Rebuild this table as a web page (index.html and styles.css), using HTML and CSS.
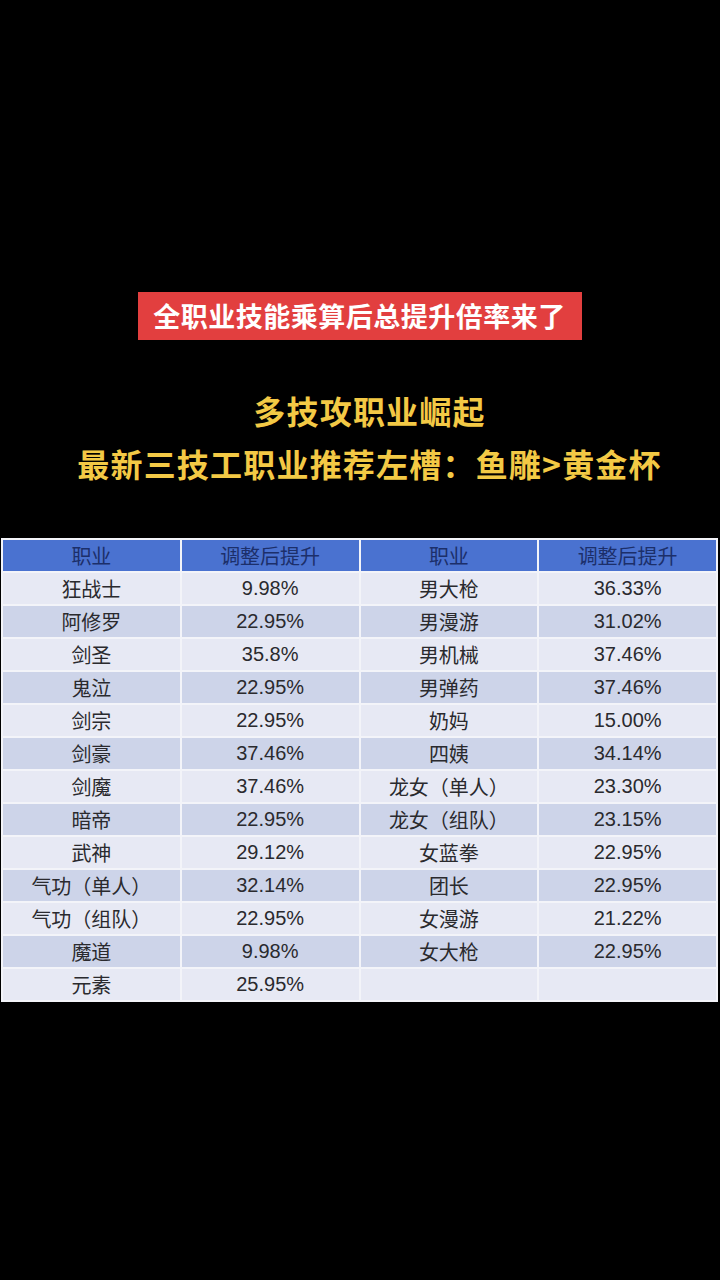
FILE: index.html
```html
<!DOCTYPE html>
<html lang="zh-CN">
<head>
<meta charset="utf-8">
<link rel="stylesheet" href="styles.css">
</head>
<body>
<main class="page">
  <div class="banner-wrap"><div class="banner">全职业技能乘算后总提升倍率来了</div></div>
  <div class="title">
    <p>多技攻职业崛起</p>
    <p>最新三技工职业推荐左槽：鱼雕&gt;黄金杯</p>
  </div>
  <table class="rates">
    <thead>
      <tr><th>职业</th><th>调整后提升</th><th>职业</th><th>调整后提升</th></tr>
    </thead>
    <tbody>
      <tr><td>狂战士</td><td class="num">9.98%</td><td>男大枪</td><td class="num">36.33%</td></tr>
      <tr><td>阿修罗</td><td class="num">22.95%</td><td>男漫游</td><td class="num">31.02%</td></tr>
      <tr><td>剑圣</td><td class="num">35.8%</td><td>男机械</td><td class="num">37.46%</td></tr>
      <tr><td>鬼泣</td><td class="num">22.95%</td><td>男弹药</td><td class="num">37.46%</td></tr>
      <tr><td>剑宗</td><td class="num">22.95%</td><td>奶妈</td><td class="num">15.00%</td></tr>
      <tr><td>剑豪</td><td class="num">37.46%</td><td>四姨</td><td class="num">34.14%</td></tr>
      <tr><td>剑魔</td><td class="num">37.46%</td><td>龙女（单人）</td><td class="num">23.30%</td></tr>
      <tr><td>暗帝</td><td class="num">22.95%</td><td>龙女（组队）</td><td class="num">23.15%</td></tr>
      <tr><td>武神</td><td class="num">29.12%</td><td>女蓝拳</td><td class="num">22.95%</td></tr>
      <tr><td>气功（单人）</td><td class="num">32.14%</td><td>团长</td><td class="num">22.95%</td></tr>
      <tr><td>气功（组队）</td><td class="num">22.95%</td><td>女漫游</td><td class="num">21.22%</td></tr>
      <tr><td>魔道</td><td class="num">9.98%</td><td>女大枪</td><td class="num">22.95%</td></tr>
      <tr><td>元素</td><td class="num">25.95%</td><td></td><td></td></tr>
    </tbody>
  </table>
</main>
</body>
</html>
```
FILE: styles.css
```css
html, body {
  margin: 0;
  padding: 0;
  background: #000;
}
.page {
  width: 720px;
  height: 1280px;
  background: #000;
  padding-top: 292px;
  box-sizing: border-box;
  font-family: "Noto Sans CJK SC", "Noto Sans", sans-serif;
}
.banner-wrap {
  display: flex;
  justify-content: center;
}
.banner {
  width: 444px;
  height: 48px;
  margin-left: -1px;
  background: #e23f3f;
  color: #fff;
  font-weight: 700;
  font-size: 27px;
  line-height: 48px;
  text-align: center;
  letter-spacing: 0.5px;
}
.title {
  margin-top: 44px;
  padding-left: 19px;
  text-align: center;
  color: #f3c945;
  font-weight: 700;
  font-size: 32px;
  letter-spacing: 1.2px;
}
.title p {
  margin: 0;
  height: 53px;
  line-height: 53px;
}
.rates {
  margin-top: 48px;
  margin-left: 1px;
  width: 717px;
  border-collapse: collapse;
  table-layout: fixed;
  background: #f3f4f9;
  border: 2px solid #f3f4f9;
  font-size: 20px;
  color: #2a2a2e;
}
.rates th, .rates td {
  height: 31px;
  padding: 0;
  border: 2px solid #f3f4f9;
  text-align: center;
  vertical-align: middle;
  line-height: 31px;
  font-weight: 400;
}
.rates th {
  background: #4a72d0;
  color: #1c2f6a;
}
.rates tbody tr:nth-child(odd) td {
  background: #e7e9f4;
}
.rates tbody tr:nth-child(even) td {
  background: #cdd4e9;
}
.rates .num {
  font-family: "Liberation Sans", Arial, sans-serif;
}
```
